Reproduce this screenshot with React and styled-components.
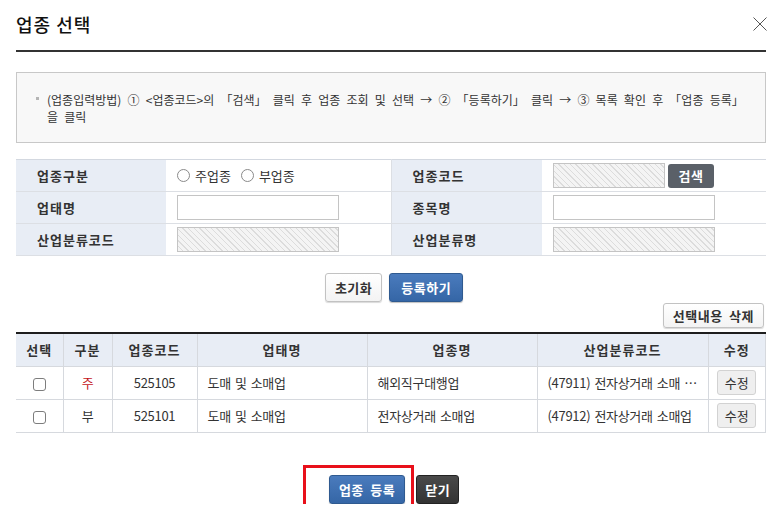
import React from 'react'
import styled, { createGlobalStyle, css } from 'styled-components'

const GlobalStyle = createGlobalStyle`
  * { box-sizing: border-box; }
  body {
    margin: 0;
    background: #fff;
    font-family: "Noto Sans CJK KR", "Liberation Sans", sans-serif;
    font-size: 12px;
    color: #333;
  }
`

const Page = styled.div`
  width: 778px;
  padding: 0 12px 0 16px;
`

const Header = styled.div`
  height: 52px;
  display: flex;
  align-items: center;
  justify-content: space-between;
  border-bottom: 2px solid #333;
  padding-bottom: 2px;
`

const Title = styled.h1`
  margin: 0;
  font-size: 18px;
  font-weight: 500;
  letter-spacing: 1px;
  color: #111;
`

const Close = styled.button`
  border: 0;
  background: none;
  padding: 0;
  margin-right: -2px;
  width: 16px;
  height: 16px;
  cursor: pointer;
`

const Guide = styled.div`
  margin-top: 20px;
  height: 71px;
  background: #f8f8f8;
  border: 1px solid #c8c8c8;
  padding: 18px 24px 0 19px;
  display: flex;
  gap: 8px;
  line-height: 17px;
  word-spacing: 3.5px;
`

const Bullet = styled.span`
  flex: none;
  width: 3px;
  height: 3px;
  margin-top: 6px;
  background: #b5b5b5;
`

const FormTable = styled.table`
  margin-top: 16px;
  width: 100%;
  border-collapse: collapse;
  border-top: 1px solid #d3d8e0;
  table-layout: fixed;
`

const Row = styled.tr`
  height: 32px;
  border-bottom: 1px solid #dcdfe4;
`

const Label = styled.th`
  background: #e8edf5;
  text-align: left;
  padding-left: 21px;
  font-size: 13px;
  font-weight: 700;
  letter-spacing: 1px;
  color: #333;
`

const Value = styled.td`
  padding-left: 11px;
  border-right: ${p => (p.$divider ? '1px solid #dcdfe4' : '0')};
`

const hatched = css`
  background: repeating-linear-gradient(
    45deg,
    #f4f4f4 0,
    #f4f4f4 3px,
    #dcdcdc 3px,
    #dcdcdc 4px
  );
`

const Field = styled.input`
  display: block;
  width: ${p => p.$w || 162}px;
  height: 25px;
  border: 1px solid #c4c4c4;
  padding: 0 4px;
  font: inherit;
  ${p => p.readOnly && hatched}
`

const Inline = styled.div`
  display: flex;
  align-items: center;
  gap: 3px;
`

const Radio = styled.label`
  display: inline-flex;
  align-items: center;
  gap: 5px;
  margin-right: 7px;
  font-size: 13px;
`

const RadioDot = styled.span`
  width: 13px;
  height: 13px;
  border-radius: 50%;
  border: 1px solid #8a8a8a;
  background: #fff;
`

const baseBtn = css`
  font: inherit;
  font-size: 13px;
  font-weight: 700;
  letter-spacing: 0.5px;
  cursor: pointer;
  border-radius: 3px;
  display: inline-flex;
  align-items: center;
  justify-content: center;
`

const SearchBtn = styled.button`
  ${baseBtn}
  width: 46px;
  height: 24px;
  border: 0;
  background: #5a6068;
  color: #fff;
`

const Btn = styled.button`
  ${baseBtn}
  height: ${p => p.$h || 29}px;
  padding: 0 ${p => p.$px || 10}px;
  word-spacing: 3px;
  ${p =>
    p.$kind === 'blue'
      ? css`
          border: 1px solid #2f5a90;
          color: #fff;
          background: linear-gradient(#4a7bbd, #3566a6);
          box-shadow: 0 1px 1px rgba(0, 0, 0, 0.25);
        `
      : p.$kind === 'dark'
      ? css`
          border: 1px solid #222;
          color: #fff;
          background: linear-gradient(#4a4a4a, #333);
        `
      : css`
          border: 1px solid #c2c2c2;
          color: #333;
          background: linear-gradient(#fff, #f3f3f3);
          box-shadow: 0 1px 1px rgba(0, 0, 0, 0.15);
        `}
`

const ActionRow = styled.div`
  margin-top: 17px;
  padding-left: 6px;
  display: flex;
  justify-content: center;
  gap: 7px;
`

const Toolbar = styled.div`
  margin-top: 1px;
  display: flex;
  justify-content: flex-end;
  padding-right: 2px;
`

const Grid = styled.table`
  margin-top: 4px;
  width: 100%;
  border-collapse: collapse;
  table-layout: fixed;
  border-top: 2px solid #1e1e1e;
  border-bottom: 1px solid #d6d9de;
`

const HeadCell = styled.th`
  height: 33px;
  background: #e8edf5;
  font-size: 13px;
  font-weight: 700;
  letter-spacing: 1px;
  border-left: 1px solid #d6d9de;
  border-bottom: 1px solid #d6d9de;
  &:first-child { border-left: 0; }
  &:last-child { border-right: 1px solid #d6d9de; }
`

const Cell = styled.td`
  height: 33px;
  font-size: 13px;
  text-align: ${p => p.$align || 'center'};
  padding: ${p => (p.$align === 'left' ? '0 10px' : '0')};
  color: ${p => p.$color || '#333'};
  border-left: 1px solid #d6d9de;
  border-bottom: 1px solid #d6d9de;
  white-space: nowrap;
  overflow: hidden;
  letter-spacing: -0.3px;
  word-spacing: 1.5px;
  &:first-child { border-left: 0; }
  &:last-child { border-right: 1px solid #d6d9de; }
`

const Check = styled.span`
  display: inline-block;
  width: 13px;
  height: 13px;
  border: 1px solid #7d7d7d;
  border-radius: 3px;
  vertical-align: middle;
`

const EditBtn = styled.button`
  font: inherit;
  font-size: 13px;
  width: 39px;
  height: 25px;
  border: 1px solid #d2d2d2;
  border-radius: 3px;
  background: #efefef;
  color: #333;
  cursor: pointer;
`

const Footer = styled.div`
  margin-top: 42px;
  padding-left: 6px;
  display: flex;
  justify-content: center;
  gap: 11px;
`

const Highlight = styled.span`
  position: relative;
  display: inline-flex;
  &::after {
    content: '';
    position: absolute;
    left: -26px;
    right: -9px;
    top: -10px;
    height: 52px;
    border: 3px solid #e8101a;
    pointer-events: none;
  }
`

const rows = [
  { type: '주', main: true, code: '525105', biz: '도매 및 소매업', item: '해외직구대행업', ind: '(47911) 전자상거래 소매 …' },
  { type: '부', main: false, code: '525101', biz: '도매 및 소매업', item: '전자상거래 소매업', ind: '(47912) 전자상거래 소매업' },
]

export default function App() {
  return (
    <Page>
      <GlobalStyle />
      <Header>
        <Title>업종 선택</Title>
        <Close aria-label="닫기">
          <svg width="16" height="16" viewBox="0 0 16 16">
            <path d="M1.5 1.5 L14.5 14.5 M14.5 1.5 L1.5 14.5" stroke="#555" strokeWidth="1" fill="none" />
          </svg>
        </Close>
      </Header>

      <Guide>
        <Bullet />
        <div>
          (업종입력방법) ① &lt;업종코드&gt;의 「검색」 클릭 후 업종 조회 및 선택 → ② 「등록하기」 클릭 → ③ 목록 확인 후 「업종 등록」을 클릭
        </div>
      </Guide>

      <FormTable>
        <colgroup>
          <col style={{ width: 150 }} />
          <col style={{ width: 225 }} />
          <col style={{ width: 151 }} />
          <col />
        </colgroup>
        <tbody>
          <Row>
            <Label>업종구분</Label>
            <Value $divider>
              <Inline>
                <Radio><RadioDot />주업종</Radio>
                <Radio><RadioDot />부업종</Radio>
              </Inline>
            </Value>
            <Label>업종코드</Label>
            <Value>
              <Inline>
                <Field readOnly $w={112} />
                <SearchBtn>검색</SearchBtn>
              </Inline>
            </Value>
          </Row>
          <Row>
            <Label>업태명</Label>
            <Value $divider><Field /></Value>
            <Label>종목명</Label>
            <Value><Field /></Value>
          </Row>
          <Row>
            <Label>산업분류코드</Label>
            <Value $divider><Field readOnly /></Value>
            <Label>산업분류명</Label>
            <Value><Field readOnly /></Value>
          </Row>
        </tbody>
      </FormTable>

      <ActionRow>
        <Btn $px={9}>초기화</Btn>
        <Btn $kind="blue" $px={11}>등록하기</Btn>
      </ActionRow>

      <Toolbar>
        <Btn $h={25} $px={9}>선택내용 삭제</Btn>
      </Toolbar>

      <Grid>
        <colgroup>
          <col style={{ width: 47 }} />
          <col style={{ width: 49 }} />
          <col style={{ width: 85 }} />
          <col style={{ width: 170 }} />
          <col style={{ width: 170 }} />
          <col style={{ width: 171 }} />
          <col />
        </colgroup>
        <thead>
          <tr>
            <HeadCell>선택</HeadCell>
            <HeadCell>구분</HeadCell>
            <HeadCell>업종코드</HeadCell>
            <HeadCell>업태명</HeadCell>
            <HeadCell>업종명</HeadCell>
            <HeadCell>산업분류코드</HeadCell>
            <HeadCell>수정</HeadCell>
          </tr>
        </thead>
        <tbody>
          {rows.map(r => (
            <tr key={r.code}>
              <Cell><Check /></Cell>
              <Cell $color={r.main ? '#c4161c' : '#333'}>{r.type}</Cell>
              <Cell>{r.code}</Cell>
              <Cell $align="left">{r.biz}</Cell>
              <Cell $align="left">{r.item}</Cell>
              <Cell $align="left">{r.ind}</Cell>
              <Cell><EditBtn>수정</EditBtn></Cell>
            </tr>
          ))}
        </tbody>
      </Grid>

      <Footer>
        <Highlight>
          <Btn $kind="blue" $px={9}>업종 등록</Btn>
        </Highlight>
        <Btn $kind="dark" $px={8}>닫기</Btn>
      </Footer>
    </Page>
  )
}
